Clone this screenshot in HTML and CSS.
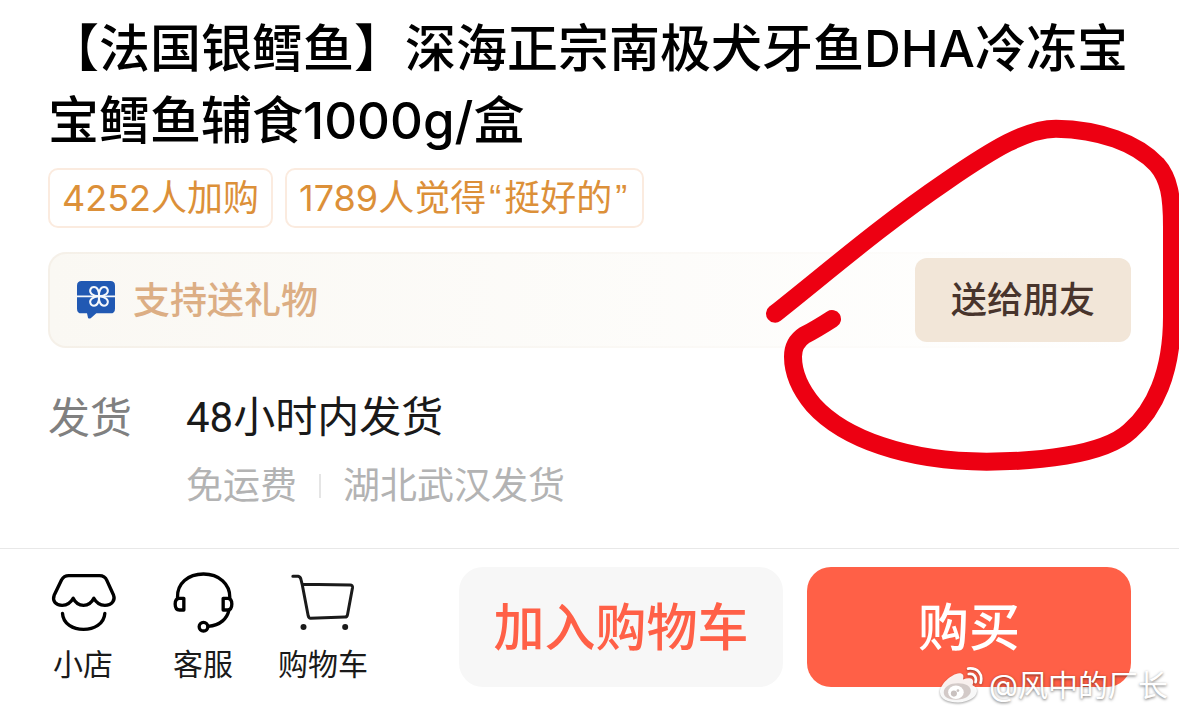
FILE: index.html
```
<!DOCTYPE html>
<html lang="zh-CN">
	<head>
		<meta charset="UTF-8">
		<meta name="viewport" content="width=device-width, initial-scale=1">
		<title>商品详情</title>
		<link rel="stylesheet" href="styles.css">
	</head>
	<body>
		<div id="goods">
			<h1 class="title">【法国银鳕鱼】深海正宗南极犬牙鱼DHA冷冻宝宝鳕鱼辅食1000g/盒</h1>

			<ul class="tags">
				<li>4252人加购</li>
				<li>1789人觉得<span class="quote">“</span>挺好的<span class="quote">”</span></li>
			</ul>

			<div class="gift">
				<svg class="gift-icon" viewBox="0 0 114 114">
					<path d="M14 0h86q14 0 14 14v69q0 14-14 14H58L42 111q-6 4-9-1l-3-13H14Q0 97 0 83V14Q0 0 14 0z" fill="#2159b3"/>
					<path d="M0 46h114" stroke="#f4f7fb" stroke-width="5"/>
					<g fill="#2159b3" stroke="#f4f7fb" stroke-width="6" stroke-linejoin="round">
						<path d="M66 46C67 30 61 18 51 18C39 18 36 32 44 39Q51 45 66 46z"/>
						<path d="M66 46C65 30 71 18 81 18C93 18 96 32 88 39Q81 45 66 46z"/>
						<path d="M66 46C67 62 61 74 51 74C39 74 36 60 44 53Q51 47 66 46z"/>
						<path d="M66 46C65 62 71 74 81 74C93 74 96 60 88 53Q81 47 66 46z"/>
					</g>
				</svg>
				<span class="gift-text">支持送礼物</span>
				<button type="button" class="gift-btn">送给朋友</button>
			</div>

			<dl class="delivery">
				<dt>发货</dt>
				<dd>
					<p class="time">48小时内发货</p>
					<p class="from"><span>免运费</span><i></i><span>湖北武汉发货</span></p>
				</dd>
			</dl>
		</div>

		<div id="bar">
			<nav class="links">
				<a href="#shop">
					<svg viewBox="0 0 200 192" fill="none" stroke="#000" stroke-width="10" stroke-linecap="round" stroke-linejoin="round">
						<path d="M56 17h92q16 0 22 14l20 44c6 15-4 31-26 31q-22 0-33-21-10 21-31 21T69 85Q58 106 36 106C15 106 6 92 12 76L34 30q7-13 22-13z"/>
						<path d="M37 130c3 64 123 64 127 0"/>
					</svg>
					<span>小店</span>
				</a>
				<a href="#service">
					<svg viewBox="0 0 200 192" fill="none" stroke="#000" stroke-width="10" stroke-linecap="round" stroke-linejoin="round">
						<path d="M22 83C20 40 54 12 100 12s80 30 79 71"/>
						<path d="M41 85v35H28c-9 0-13-7-13-18s4-17 13-17zM159 85v35h13c9 0 13-7 13-18s-4-17-13-17z"/>
						<path d="M176 122c-5 22-24 44-62 47"/>
						<circle cx="100" cy="170" r="13"/>
					</svg>
					<span>客服</span>
				</a>
				<a href="#cart">
					<svg viewBox="0 0 200 192" fill="none" stroke="#1a1a1a" stroke-width="9" stroke-linecap="round" stroke-linejoin="round">
						<path d="M8 19h16q6 1 8 8l4 16M36 43l144 2q8 0 7 8l-15 81q-1 7-8 7l-103 4q-5 0-7-8L36 43"/>
						<circle cx="40" cy="171" r="9" fill="#1a1a1a" stroke="none"/>
						<circle cx="165" cy="171" r="9" fill="#1a1a1a" stroke="none"/>
					</svg>
					<span>购物车</span>
				</a>
			</nav>
			<button type="button" class="btn add">加入购物车</button>
			<button type="button" class="btn buy">购买</button>
		</div>

		<!-- 手绘红圈 -->
		<svg class="mark" viewBox="0 0 1287 1110" fill="none" stroke="#ed0012" stroke-width="54" stroke-linecap="round" stroke-linejoin="round">
			<path d="M75 611C240 480 400 342 590 213C730 117 830 56 918 56C1050 58 1160 100 1220 163C1258 206 1266 260 1266 350V620C1266 790 1212 900 1140 963C1060 1038 850 1055 710 1055C470 1055 280 985 190 885C150 837 129 790 129 740C129 710 142 690 163 676C190 662 215 647 246 627"/>
		</svg>

		<!-- 微博水印 -->
		<div class="watermark">
			<svg viewBox="0 0 130 108">
				<path d="M3 74C2 52 36 20 60 18c12 0 14 7 11 18 16-6 32-5 30 10-1 4-3 6-1 8 8 3 13 9 12 18-2 19-29 32-56 32C27 104 4 95 3 74z" fill="#fff" fill-opacity=".92"/>
				<path d="M14 74c0-17 19-27 42-27s38 9 38 23-19 26-43 26S14 88 14 74z" fill="#d3cac8"/>
				<ellipse cx="50" cy="74" rx="23" ry="20" fill="#fff"/>
				<circle cx="44" cy="78" r="9" fill="#c9c1bf"/>
				<circle cx="56" cy="69" r="4" fill="#c9c1bf"/>
				<path d="M88 20c15-2 24 8 20 24M86 4c29-3 44 17 37 42" fill="none" stroke="#fff" stroke-width="8" stroke-linecap="round"/>
			</svg>
			<span>@风中的厂长</span>
		</div>
	</body>
</html>
```
FILE: styles.css
```
* {
	margin: 0;
	padding: 0;
	box-sizing: border-box;
}
ul, li {
	list-style: none;
}
body {
	position: relative;
	background: #fff;
	font-family: Inter, "Noto Sans CJK SC", sans-serif;
	color: #1a1a1a;
	overflow-x: hidden;
}
button {
	border: none;
	font-family: inherit;
	cursor: pointer;
}
a {
	color: inherit;
	text-decoration: none;
}

#goods {
	padding: 13px 48px 35px;
}
.title {
	font-size: 51px;
	line-height: 72px;
	font-weight: 500;
	color: #000;
}

.tags {
	display: flex;
	gap: 12px;
	margin-top: 11px;
}
.tags li {
	height: 60px;
	padding: 0 12px;
	border: 2px solid #fbebdf;
	border-radius: 10px;
	font-size: 36px;
	line-height: 56px;
	color: #dc9039;
}
.quote {
	padding: 0 3px;
	font-family: "Liberation Sans", sans-serif;
}

.gift {
	display: flex;
	align-items: center;
	height: 96px;
	margin-top: 24px;
	padding-left: 27px;
	border: 2px solid transparent;
	border-right: none;
	border-radius: 18px;
	background: linear-gradient(90deg, #faf8f3, #fff) padding-box, linear-gradient(90deg, #f5f0e8, #fff) border-box;
}
.gift-icon {
	width: 38px;
	height: 38px;
	margin-right: 18px;
}
.gift-text {
	flex: 1;
	padding-bottom: 5px;
	font-size: 37px;
	font-weight: 500;
	color: #dcae84;
}
.gift-btn {
	width: 216px;
	height: 84px;
	padding-bottom: 6px;
	border-radius: 12px;
	background: #f2e6d8;
	font-size: 36px;
	font-weight: 500;
	color: #48342c;
}

.delivery {
	display: flex;
	margin-top: 40px;
	font-size: 42px;
	line-height: 60px;
}
.delivery dt {
	width: 138px;
	color: #808080;
}
.delivery .time {
	font-family: Roboto, "Noto Sans CJK SC", sans-serif;
}
.delivery .from {
	display: flex;
	align-items: center;
	margin-top: 11px;
	font-size: 37px;
	line-height: 54px;
	color: #b3b3b3;
}
.from i {
	width: 2px;
	height: 24px;
	margin: 0 22px;
	background: #e5e5e5;
}

#bar {
	display: flex;
	align-items: center;
	gap: 24px;
	padding: 18px 48px 26px 23px;
	border-top: 1px solid #e8e8e8;
}
.links {
	display: flex;
	margin-right: 52px;
	padding-top: 2px;
}
.links a {
	display: flex;
	flex-direction: column;
	align-items: center;
	width: 120px;
	font-size: 30px;
	line-height: 44px;
}
.links svg {
	width: 67px;
	height: 64px;
	margin-bottom: 8px;
}
.btn {
	flex: 1;
	height: 120px;
	padding-bottom: 6px;
	border-radius: 24px;
	font-size: 51px;
	font-weight: 500;
}
.add {
	background: #f7f7f7;
	color: #ff6047;
}
.buy {
	background: #ff6047;
	color: #fff;
}

.mark {
	position: absolute;
	top: 110px;
	right: 0;
	width: 429px;
	height: 370px;
	pointer-events: none;
}

.watermark {
	position: absolute;
	right: 11px;
	bottom: 6px;
	display: flex;
	align-items: center;
	gap: 6px;
	font-size: 30px;
	line-height: 44px;
	color: #fff;
	text-shadow: 0 1px 3px rgba(0, 0, 0, .55);
	pointer-events: none;
}
.watermark svg {
	width: 44px;
	height: 37px;
	filter: drop-shadow(0 1px 1px rgba(0, 0, 0, .4));
}
```
